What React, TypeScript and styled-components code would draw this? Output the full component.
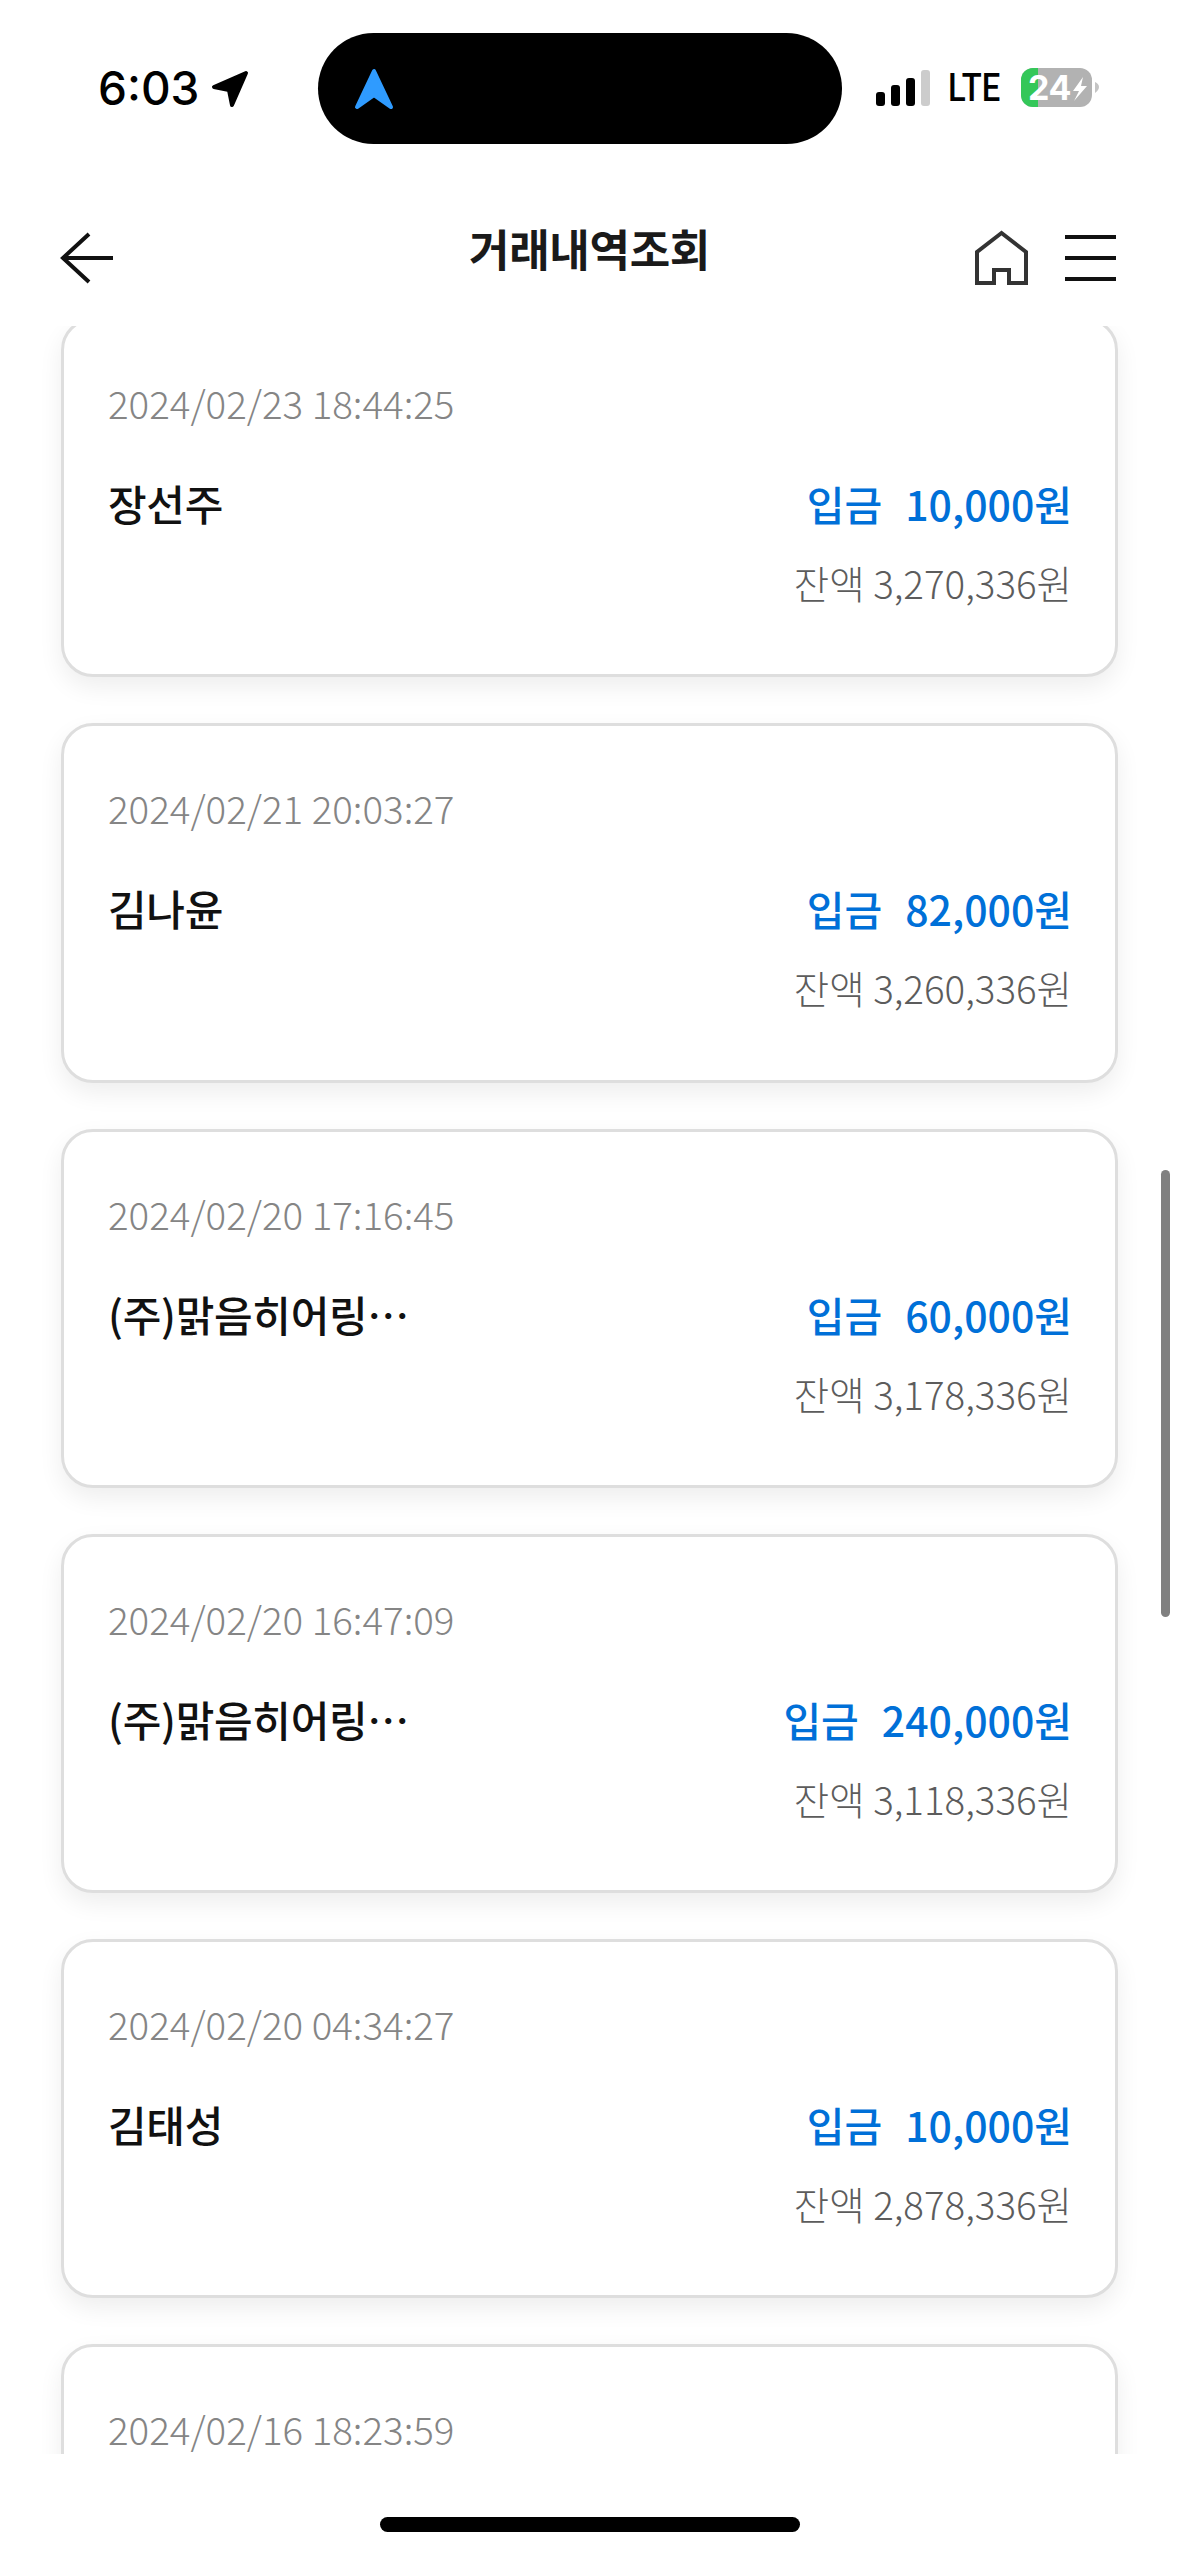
import React from "react";
import styled, { createGlobalStyle } from "styled-components";

const Global = createGlobalStyle`
  html, body { margin: 0; padding: 0; background: #fff; }
  body { font-family: "Noto Sans CJK KR", "Noto Sans", sans-serif; }
`;
const FONT = `"Noto Sans CJK KR", "Noto Sans", sans-serif`;

const Page = styled.div`
  position: relative; width: 1179px; height: 2556px; overflow: hidden; background: #fff;
  display: flex; flex-direction: column;
`;
const StatusBar = styled.div`
  height: 190px; box-sizing: border-box; padding-top: 33px; display: flex; align-items: flex-start; flex: none;
`;
const StatusLeft = styled.div`
  width: 318px; height: 111px; flex: none; box-sizing: border-box; padding-left: 98px; display: flex; align-items: center; gap: 12px;
`;
const Time = styled.span`
  font-family: Inter, sans-serif; font-weight: 550; font-size: 46px; line-height: 56px; color: #000;
  transform: translateY(-1px);
`;
const Island = styled.div`
  width: 524px; height: 111px; flex: none; border-radius: 56px; background: #000; display: flex; align-items: center; padding-left: 36px; box-sizing: border-box;
`;
const StatusRight = styled.div`
  flex: 1; height: 111px; box-sizing: border-box; padding-left: 34px; display: flex; align-items: center;
  transform: translateY(-1px);
`;
const Lte = styled.span`
  display: inline-block; width: 55px; margin: 0 18px 0 18px; font-family: Roboto, sans-serif; font-weight: 500; font-size: 39px; line-height: 40px; color: #000;
  transform: scaleX(0.84); transform-origin: left center; white-space: nowrap;
`;
const Header = styled.header`
  height: 136px; flex: none; box-sizing: border-box; padding: 0 63px 0 60px; display: flex; align-items: center; justify-content: space-between; position: relative;
`;
const Title = styled.h1`
  position: absolute; left: 0; right: 0; top: 28px; margin: 0; text-align: center; font-family: ${FONT}; font-weight: 700; font-size: 44px; line-height: 60px; color: #1a1a1a; letter-spacing: -0.3px;
`;
const HeaderIcons = styled.div`
  display: flex; align-items: center; gap: 37px;
`;
const ListClip = styled.main`
  height: 2128px; flex: none; overflow: hidden;
`;
const List = styled.div`
  margin-top: -8px; padding: 0 61px; display: flex; flex-direction: column; gap: 46px;
`;
const Card = styled.article`
  height: 359.25px; flex: none; box-sizing: border-box; border: 3px solid #dedede; border-radius: 32px; background: #fff; padding: 56px 46px 0 44px;
  box-shadow: 0 10px 24px rgba(0,0,0,0.07);
`;
const DateText = styled.div`
  font-family: ${FONT}; font-weight: 300; font-size: 38.5px; line-height: 50px; color: #858585;
`;
const Main = styled.div`
  margin-top: 51px; display: flex; justify-content: space-between; align-items: flex-start;
`;
const Name = styled.div`
  font-family: ${FONT}; font-weight: 500; font-size: 42px; line-height: 50px; color: #111; white-space: nowrap; letter-spacing: -0.3px;
`;
const RightCol = styled.div`
  display: flex; flex-direction: column; align-items: flex-end; gap: 29px; margin-right: -3px;
`;
const Amount = styled.div`
  display: flex; gap: 23px; font-family: ${FONT}; font-weight: 500; font-size: 41px; line-height: 50px; color: #0070d8;
`;
const Balance = styled.div`
  font-family: ${FONT}; font-weight: 300; font-size: 38.5px; line-height: 50px; color: #5c5c5c;
`;
const Footer = styled.footer`
  flex: 1; display: flex; justify-content: center; padding-top: 63px; box-sizing: border-box;
`;
const HomeBar = styled.div`
  width: 420px; height: 15px; border-radius: 8px; background: #000;
`;
const ScrollThumb = styled.div`
  position: absolute; left: 1161px; top: 1170px; width: 9px; height: 447px; border-radius: 5px; background: #808080;
`;

const rows = [
  { date: "2024/02/23 18:44:25", name: "장선주", amount: "10,000원", balance: "잔액 3,270,336원" },
  { date: "2024/02/21 20:03:27", name: "김나윤", amount: "82,000원", balance: "잔액 3,260,336원" },
  { date: "2024/02/20 17:16:45", name: "(주)맑음히어링…", amount: "60,000원", balance: "잔액 3,178,336원" },
  { date: "2024/02/20 16:47:09", name: "(주)맑음히어링…", amount: "240,000원", balance: "잔액 3,118,336원" },
  { date: "2024/02/20 04:34:27", name: "김태성", amount: "10,000원", balance: "잔액 2,878,336원" },
  { date: "2024/02/16 18:23:59", name: "", amount: "", balance: "" },
];

export default function App() {
  return (
    <Page>
      <Global />
      <StatusBar>
        <StatusLeft>
          <Time>6:03</Time>
          <svg width="38" height="38" viewBox="0 0 38 38">
            <path d="M35 3 L3 17 L18 20 L21 35 Z" fill="#000" stroke="#000" strokeWidth="4" strokeLinejoin="round" />
          </svg>
        </StatusLeft>
        <Island>
          <svg width="40" height="44" viewBox="0 0 40 44">
            <path d="M20 4 L3 40 L20 28 L37 40 Z" fill="#2f9bff" stroke="#2f9bff" strokeWidth="4" strokeLinejoin="round" />
          </svg>
        </Island>
        <StatusRight>
          <svg width="54" height="36" viewBox="0 0 54 36">
            <rect x="0" y="22" width="9" height="14" rx="3" fill="#000" />
            <rect x="15" y="15" width="9" height="21" rx="3" fill="#000" />
            <rect x="30" y="8" width="9" height="28" rx="3" fill="#000" />
            <rect x="45" y="0" width="9" height="36" rx="3" fill="#ccc" />
          </svg>
          <Lte>LTE</Lte>
          <svg width="80" height="40" viewBox="0 0 80 40">
            <defs>
              <clipPath id="batt"><rect x="0" y="0" width="71" height="39" rx="12" /></clipPath>
            </defs>
            <g clipPath="url(#batt)">
              <rect x="0" y="0" width="71" height="39" fill="#b2b2b2" />
              <rect x="0" y="0" width="17" height="39" fill="#34c759" />
            </g>
            <path d="M74 14 q4 2 4 5 t-4 6 Z" fill="#c4c4c4" />
            <text x="7" y="32" fontFamily="Inter, sans-serif" fontWeight="700" fontSize="34" fill="#fff" letterSpacing="-0.5">24</text>
            <path d="M62 9 L52 23 H58 L53 33 L66 18 H60 Z" fill="#fff" />
          </svg>
        </StatusRight>
      </StatusBar>
      <Header>
        <svg width="53" height="52" viewBox="0 0 53 52">
          <path d="M53 26 H4 M29 2 L3 26 L29 50" fill="none" stroke="#111" strokeWidth="4" />
        </svg>
        <Title>거래내역조회</Title>
        <HeaderIcons>
          <svg width="53" height="56" viewBox="0 0 53 56">
            <path d="M26.5 3 L2 22 V53 H19 V40 H34 V53 H51 V22 Z" fill="none" stroke="#333" strokeWidth="4" strokeLinejoin="miter" />
          </svg>
          <svg width="51" height="46" viewBox="0 0 51 46">
            <path d="M0 2 H51 M0 23 H51 M0 44 H51" stroke="#111" strokeWidth="4" />
          </svg>
        </HeaderIcons>
      </Header>
      <ListClip>
        <List>
          {rows.map((r) => (
            <Card key={r.date}>
              <DateText>{r.date}</DateText>
              {r.name && (
                <Main>
                  <Name>{r.name}</Name>
                  <RightCol>
                    <Amount>
                      <span>입금</span>
                      <span>{r.amount}</span>
                    </Amount>
                    <Balance>{r.balance}</Balance>
                  </RightCol>
                </Main>
              )}
            </Card>
          ))}
        </List>
      </ListClip>
      <Footer>
        <HomeBar />
      </Footer>
      <ScrollThumb />
    </Page>
  );
}
